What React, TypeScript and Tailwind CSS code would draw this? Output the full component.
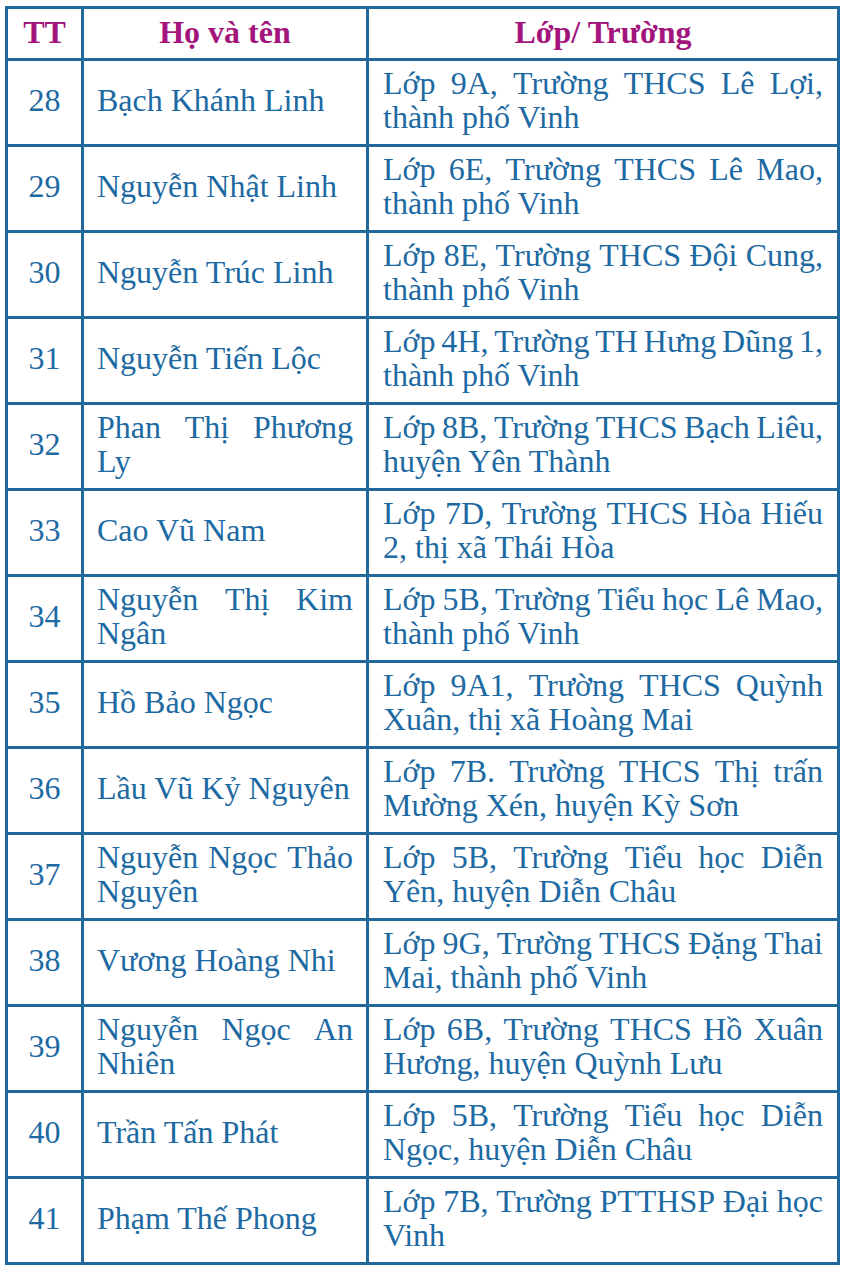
const rows: { tt: number; name: string[]; school: string[] }[] = [
  { tt: 28, name: ['Bạch Khánh Linh'], school: ['Lớp 9A, Trường THCS Lê Lợi,', 'thành phố Vinh'] },
  { tt: 29, name: ['Nguyễn Nhật Linh'], school: ['Lớp 6E, Trường THCS Lê Mao,', 'thành phố Vinh'] },
  { tt: 30, name: ['Nguyễn Trúc Linh'], school: ['Lớp 8E, Trường THCS Đội Cung,', 'thành phố Vinh'] },
  { tt: 31, name: ['Nguyễn Tiến Lộc'], school: ['Lớp 4H, Trường TH Hưng Dũng 1,', 'thành phố Vinh'] },
  { tt: 32, name: ['Phan Thị Phương', 'Ly'], school: ['Lớp 8B, Trường THCS Bạch Liêu,', 'huyện Yên Thành'] },
  { tt: 33, name: ['Cao Vũ Nam'], school: ['Lớp 7D, Trường THCS Hòa Hiếu', '2, thị xã Thái Hòa'] },
  { tt: 34, name: ['Nguyễn Thị Kim', 'Ngân'], school: ['Lớp 5B, Trường Tiểu học Lê Mao,', 'thành phố Vinh'] },
  { tt: 35, name: ['Hồ Bảo Ngọc'], school: ['Lớp 9A1, Trường THCS Quỳnh', 'Xuân, thị xã Hoàng Mai'] },
  { tt: 36, name: ['Lầu Vũ Kỷ Nguyên'], school: ['Lớp 7B. Trường THCS Thị trấn', 'Mường Xén, huyện Kỳ Sơn'] },
  { tt: 37, name: ['Nguyễn Ngọc Thảo', 'Nguyên'], school: ['Lớp 5B, Trường Tiểu học Diễn', 'Yên, huyện Diễn Châu'] },
  { tt: 38, name: ['Vương Hoàng Nhi'], school: ['Lớp 9G, Trường THCS Đặng Thai', 'Mai, thành phố Vinh'] },
  { tt: 39, name: ['Nguyễn Ngọc An', 'Nhiên'], school: ['Lớp 6B, Trường THCS Hồ Xuân', 'Hương, huyện Quỳnh Lưu'] },
  { tt: 40, name: ['Trần Tấn Phát'], school: ['Lớp 5B, Trường Tiểu học Diễn', 'Ngọc, huyện Diễn Châu'] },
  { tt: 41, name: ['Phạm Thế Phong'], school: ['Lớp 7B,  Trường PTTHSP Đại học', 'Vinh'] },
];

// first line of a wrapped cell is stretched edge to edge, the last one sits left
function Lines({ lines }: { lines: string[] }) {
  if (lines.length === 1) return <div className="whitespace-nowrap">{lines[0]}</div>;
  return (
    <div>
      {lines.map((line, i) =>
        i < lines.length - 1 ? (
          <div key={i} className="flex justify-between whitespace-nowrap">
            {line.split(/\s+/).map((w, j) => (
              <span key={j}>{w}</span>
            ))}
          </div>
        ) : (
          <div key={i} className="whitespace-nowrap">
            {line}
          </div>
        ),
      )}
    </div>
  );
}

export default function App() {
  return (
    <div className="min-h-screen w-[844px] bg-white pt-[6px] pl-[5px] font-['Liberation_Serif',serif] text-[32px] leading-[34px] text-[#1d6aa3]">
      <table className="w-[835px] table-fixed border-collapse">
        <colgroup>
          <col className="w-[76px]" />
          <col className="w-[285px]" />
          <col />
        </colgroup>
        <thead>
          <tr className="h-[52px]">
            <th className="border-[3px] border-[#23689a] pb-[3px] text-center font-bold text-[#a3157c]">TT</th>
            <th className="border-[3px] border-[#23689a] pb-[3px] text-center font-bold text-[#a3157c]">Họ và tên</th>
            <th className="border-[3px] border-[#23689a] pb-[3px] text-center font-bold text-[#a3157c]">Lớp/ Trường</th>
          </tr>
        </thead>
        <tbody>
          {rows.map((r) => (
            <tr key={r.tt} className="h-[86px]">
              <td className="border-[3px] border-[#23689a] pb-[5px] text-center align-middle">{r.tt}</td>
              <td className="border-[3px] border-[#23689a] px-[13px] pb-[5px] align-middle">
                <Lines lines={r.name} />
              </td>
              <td className="border-[3px] border-[#23689a] px-[14px] pb-[5px] align-middle">
                <Lines lines={r.school} />
              </td>
            </tr>
          ))}
        </tbody>
      </table>
    </div>
  );
}
